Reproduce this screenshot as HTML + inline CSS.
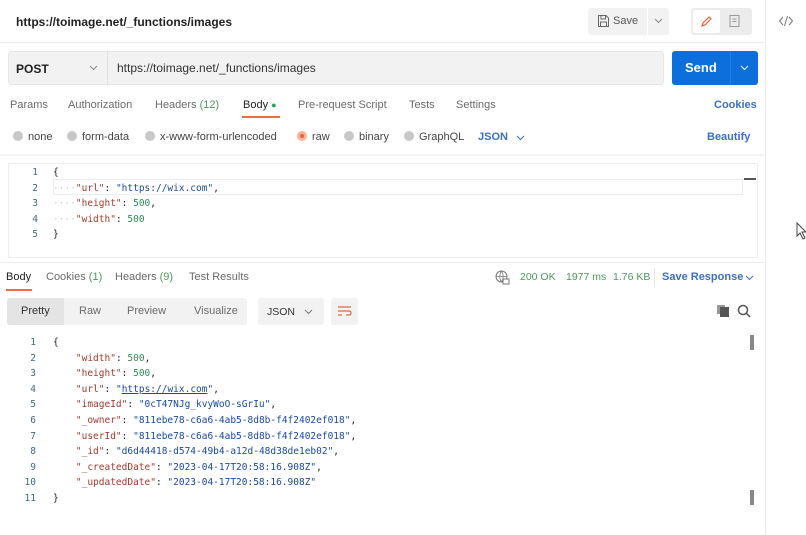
<!DOCTYPE html>
<html><head><style>
*{margin:0;padding:0;box-sizing:border-box}
body{width:806px;height:535px;background:#fff;font-family:"Liberation Sans",sans-serif;position:relative;overflow:hidden;color:#212121;font-size:12px}
.a{position:absolute;white-space:nowrap}
.mono{font-family:"DejaVu Sans Mono","Liberation Mono",monospace;font-size:9.5px}
.k{color:#a23b2d}.s{color:#1b4aa0}.n{color:#2f8a5c}
.g{color:#6b6b6b}
.t{font-size:11px}
.ln{color:#3d6b8a;text-align:right;width:20px}
.rad{display:inline-block;width:10px;height:10px;border-radius:50%;background:#c8c8c8;vertical-align:-1px;margin-right:5px}
.chev{display:inline-block;vertical-align:1px}
</style></head><body>
<div class="a" style="left:0;top:0;width:765px;height:43px;border-bottom:1px solid #ececec"></div>
<div class="a" style="left:765px;top:0;width:1px;height:535px;background:#ececec"></div>
<div class="a" style="left:16px;top:15px;font-size:12px;font-weight:bold;color:#222">https://toimage.net/_functions/images</div>
<div class="a" style="left:588px;top:8px;width:81px;height:27px;background:#f2f2f2;border-radius:3px"></div>
<div class="a" style="left:647px;top:8px;width:1px;height:27px;background:#fff"></div>
<svg class="a" style="left:597px;top:14px" width="13" height="14"><path d="M1.5 1.5 H9 L11.5 4 V12.5 H1.5 Z M4 1.5 V5 H8.5 V1.5 M3.5 12.5 V8 H9.5 V12.5" fill="none" stroke="#666"/></svg>
<div class="a" style="left:613px;top:15px;font-size:11px;color:#555">Save</div>
<svg class="a" style="left:654px;top:18px" width="9" height="6"><path d="M1 1 L4.5 4.5 L8 1" fill="none" stroke="#888"/></svg>
<div class="a" style="left:691px;top:8px;width:61px;height:27px;background:#ececec;border-radius:3px"></div>
<div class="a" style="left:693px;top:10px;width:27px;height:23px;background:#fff;border-radius:2px"></div>
<svg class="a" style="left:699px;top:14px" width="14" height="14"><path d="M3 12 L4 9 L10 3 L12 5 L6 11 Z" fill="none" stroke="#e0683c" stroke-width="1.2"/></svg>
<svg class="a" style="left:728px;top:14px" width="13" height="14"><path d="M2 1.5 H11 V12.5 H2 Z M4.5 5 H8.5 M4.5 7.5 H8.5" fill="none" stroke="#999"/></svg>
<svg class="a" style="left:778px;top:14px" width="16" height="14"><path d="M5 3 L1.5 7 L5 11 M11 3 L14.5 7 L11 11 M9.5 2 L6.5 12" fill="none" stroke="#777"/></svg>

<div class="a" style="left:8px;top:51px;width:656px;height:34px;background:#f2f2f2;border-radius:3px;border:1px solid #e6e6e6"></div>
<div class="a" style="left:107px;top:51px;width:1px;height:34px;background:#e0e0e0"></div>
<div class="a" style="left:16px;top:62px;font-weight:bold;font-size:12px">POST</div>
<svg class="a" style="left:89px;top:65px" width="9" height="6"><path d="M1 1 L4.5 4.5 L8 1" fill="none" stroke="#888"/></svg>
<div class="a" style="left:117px;top:61px;font-size:12px;color:#333">https://toimage.net/_functions/images</div>
<div class="a" style="left:672px;top:51px;width:86px;height:34px;background:#0c6fdc;border-radius:3px"></div>
<div class="a" style="left:730px;top:51px;width:1px;height:34px;background:#2a7fe0"></div>
<div class="a" style="left:685px;top:60px;color:#fff;font-weight:bold;font-size:13px">Send</div>
<svg class="a" style="left:740px;top:65px" width="9" height="6"><path d="M1 1 L4.5 4.5 L8 1" fill="none" stroke="#fff"/></svg>

<div class="a g t" style="left:10px;top:99px">Params</div>
<div class="a g t" style="left:68px;top:99px">Authorization</div>
<div class="a g t" style="left:155px;top:99px">Headers <span style="color:#4a9a5c">(12)</span></div>
<div class="a t" style="left:243px;top:99px;color:#222">Body <span style="color:#22a45d;font-size:9px">&#9679;</span></div>
<div class="a" style="left:242px;top:116px;width:38px;height:2px;background:#f26b3a"></div>
<div class="a g t" style="left:298px;top:99px">Pre-request Script</div>
<div class="a g t" style="left:409px;top:99px">Tests</div>
<div class="a g t" style="left:456px;top:99px">Settings</div>
<div class="a t" style="left:714px;top:99px;font-weight:bold;color:#3d6fc2">Cookies</div>

<div class="a t" style="left:13px;top:131px;color:#444"><span class="rad"></span>none</div>
<div class="a t" style="left:67px;top:131px;color:#444"><span class="rad"></span>form-data</div>
<div class="a t" style="left:145px;top:131px;color:#444"><span class="rad"></span>x-www-form-urlencoded</div>
<div class="a t" style="left:297px;top:131px;color:#444"><span class="rad" style="border:3px solid #f5b59d;background:#e8623a"></span>raw</div>
<div class="a t" style="left:344px;top:131px;color:#444"><span class="rad"></span>binary</div>
<div class="a t" style="left:404px;top:131px;color:#444"><span class="rad"></span>GraphQL</div>
<div class="a t" style="left:478px;top:131px;font-weight:bold;color:#3d6fc2">JSON</div>
<svg class="a" style="left:516px;top:135px" width="9" height="6"><path d="M1 1 L4.5 4.5 L8 1" fill="none" stroke="#3d6fc2"/></svg>
<div class="a t" style="left:707px;top:131px;font-weight:bold;color:#3d6fc2">Beautify</div>
<div class="a" style="left:0;top:154px;width:765px;height:2px;background:#f4f4f4"></div>

<div class="a" style="left:8px;top:163px;width:750px;height:95px;border:1px solid #eee"></div>
<div class="a" style="left:53px;top:179px;width:690px;height:16px;border:1px solid #ececec"></div>
<div class="a" style="left:744px;top:178px;width:12px;height:2px;background:#555"></div>
<div class="a mono ln" style="left:18px;top:165px;line-height:15.5px">1<br>2<br>3<br>4<br>5</div>
<div class="a mono" style="left:53px;top:165px;line-height:15.5px">{<br><span style="color:#ccc">····</span><span class="k">"url"</span>: <span class="s">"https://wix.com"</span>,<br><span style="color:#ccc">····</span><span class="k">"height"</span>: <span class="n">500</span>,<br><span style="color:#ccc">····</span><span class="k">"width"</span>: <span class="n">500</span><br>}</div>
<svg class="a" style="left:796px;top:222px" width="12" height="18"><path d="M1 1 V14 L4 11 L7 17 L9 16 L6 10 H10 Z" fill="#fff" stroke="#444"/></svg>

<div class="a" style="left:0;top:262px;width:765px;height:1px;background:#ececec"></div>
<div class="a t" style="left:6px;top:271px;color:#222">Body</div>
<div class="a" style="left:6px;top:289px;width:26px;height:2px;background:#f26b3a"></div>
<div class="a g t" style="left:46px;top:271px">Cookies <span style="color:#4a9a5c">(1)</span></div>
<div class="a g t" style="left:115px;top:271px">Headers <span style="color:#4a9a5c">(9)</span></div>
<div class="a g t" style="left:189px;top:271px">Test Results</div>
<svg class="a" style="left:495px;top:270px" width="15" height="15"><circle cx="6.5" cy="6.5" r="5.5" fill="none" stroke="#777"/><path d="M1 6.5 H12 M6.5 1 Q3 6.5 6.5 12 M6.5 1 Q10 6.5 6.5 12" fill="none" stroke="#777" stroke-width=".8"/><rect x="8" y="9" width="6" height="5" fill="#fff" stroke="#777"/></svg>
<div class="a" style="left:520px;top:271px;font-size:10.5px;color:#4a9a5c">200 OK</div>
<div class="a" style="left:566px;top:271px;font-size:10.5px;color:#4a9a5c">1977 ms</div>
<div class="a" style="left:613px;top:271px;font-size:10.5px;color:#4a9a5c">1.76 KB</div>
<div class="a" style="left:654px;top:268px;width:1px;height:18px;background:#e6e6e6"></div>
<div class="a t" style="left:662px;top:271px;font-weight:bold;color:#3d6fc2">Save Response</div>
<svg class="a" style="left:745px;top:275px" width="9" height="6"><path d="M1 1 L4.5 4.5 L8 1" fill="none" stroke="#3d6fc2"/></svg>

<div class="a" style="left:7px;top:298px;width:240px;height:27px;background:#f2f2f2;border-radius:3px"></div>
<div class="a" style="left:7px;top:298px;width:57px;height:27px;background:#e4e4e4;border-radius:3px 0 0 3px"></div>
<div class="a t" style="left:21px;top:305px;color:#333">Pretty</div>
<div class="a g t" style="left:79px;top:305px">Raw</div>
<div class="a g t" style="left:127px;top:305px">Preview</div>
<div class="a g t" style="left:194px;top:305px">Visualize</div>
<div class="a" style="left:258px;top:298px;width:66px;height:27px;background:#f2f2f2;border-radius:3px"></div>
<div class="a" style="left:267px;top:306px;font-size:10.5px;color:#333">JSON</div>
<svg class="a" style="left:304px;top:309px" width="9" height="6"><path d="M1 1 L4.5 4.5 L8 1" fill="none" stroke="#777"/></svg>
<div class="a" style="left:331px;top:298px;width:27px;height:27px;background:#f2f2f2;border-radius:3px"></div>
<svg class="a" style="left:337px;top:305px" width="15" height="13"><path d="M1 2 H14 M1 6 H12 Q14 6 14 8 Q14 10 12 10 H9 M1 10 H5" fill="none" stroke="#e0683c" stroke-width="1.2"/></svg>
<svg class="a" style="left:716px;top:304px" width="14" height="14"><rect x="1" y="1" width="8" height="9" fill="#999"/><rect x="4" y="3" width="9" height="10" fill="#555"/></svg>
<svg class="a" style="left:737px;top:304px" width="14" height="14"><circle cx="6" cy="6" r="4.5" fill="none" stroke="#555" stroke-width="1.5"/><path d="M9.5 9.5 L13 13" stroke="#555" stroke-width="1.5"/></svg>

<div class="a" style="left:750px;top:335px;width:4px;height:15px;background:#888"></div>
<div class="a" style="left:750px;top:490px;width:4px;height:15px;background:#888"></div>
<div class="a mono ln" style="left:16px;top:335px;line-height:15.6px">1<br>2<br>3<br>4<br>5<br>6<br>7<br>8<br>9<br>10<br>11</div>
<div class="a mono" style="left:53px;top:335px;line-height:15.6px">{<br>
&nbsp;&nbsp;&nbsp;&nbsp;<span class="k">"width"</span>: <span class="n">500</span>,<br>
&nbsp;&nbsp;&nbsp;&nbsp;<span class="k">"height"</span>: <span class="n">500</span>,<br>
&nbsp;&nbsp;&nbsp;&nbsp;<span class="k">"url"</span>: <span class="s">"<u>https://wix.com</u>"</span>,<br>
&nbsp;&nbsp;&nbsp;&nbsp;<span class="k">"imageId"</span>: <span class="s">"0cT47NJg_kvyWoO-sGrIu"</span>,<br>
&nbsp;&nbsp;&nbsp;&nbsp;<span class="k">"_owner"</span>: <span class="s">"811ebe78-c6a6-4ab5-8d8b-f4f2402ef018"</span>,<br>
&nbsp;&nbsp;&nbsp;&nbsp;<span class="k">"userId"</span>: <span class="s">"811ebe78-c6a6-4ab5-8d8b-f4f2402ef018"</span>,<br>
&nbsp;&nbsp;&nbsp;&nbsp;<span class="k">"_id"</span>: <span class="s">"d6d44418-d574-49b4-a12d-48d38de1eb02"</span>,<br>
&nbsp;&nbsp;&nbsp;&nbsp;<span class="k">"_createdDate"</span>: <span class="s">"2023-04-17T20:58:16.908Z"</span>,<br>
&nbsp;&nbsp;&nbsp;&nbsp;<span class="k">"_updatedDate"</span>: <span class="s">"2023-04-17T20:58:16.908Z"</span><br>
}</div>
</body></html>
